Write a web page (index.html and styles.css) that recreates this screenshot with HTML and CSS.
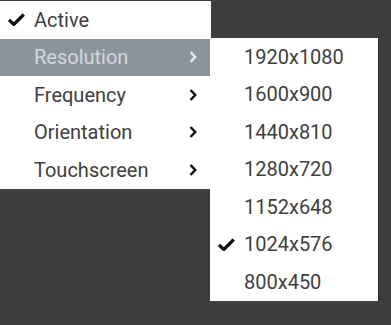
FILE: index.html
```html
<!DOCTYPE html>
<html lang="en">
<head>
  <meta charset="UTF-8">
  <title>Screen menu</title>
  <link rel="stylesheet" href="styles.css">
</head>
<body>
  <div class="menus">
    <ul class="menu main-menu">
      <li class="item">
        <span class="check"><svg width="17" height="13" viewBox="0 0 17 13"><path d="M1 7 L5.8 11.5 L15.8 1.5" fill="none" stroke="#111" stroke-width="3.2"/></svg></span>
        <span class="label">Active</span>
      </li>
      <li class="item selected">
        <span class="check"></span>
        <span class="label">Resolution</span>
        <svg class="arrow" width="8" height="12" viewBox="0 0 8 12"><path d="M1.5 1 L6.2 6 L1.5 11" fill="none" stroke="currentColor" stroke-width="2.5"/></svg>
      </li>
      <li class="item">
        <span class="check"></span>
        <span class="label">Frequency</span>
        <svg class="arrow" width="8" height="12" viewBox="0 0 8 12"><path d="M1.5 1 L6.2 6 L1.5 11" fill="none" stroke="currentColor" stroke-width="2.5"/></svg>
      </li>
      <li class="item">
        <span class="check"></span>
        <span class="label">Orientation</span>
        <svg class="arrow" width="8" height="12" viewBox="0 0 8 12"><path d="M1.5 1 L6.2 6 L1.5 11" fill="none" stroke="currentColor" stroke-width="2.5"/></svg>
      </li>
      <li class="item">
        <span class="check"></span>
        <span class="label">Touchscreen</span>
        <svg class="arrow" width="8" height="12" viewBox="0 0 8 12"><path d="M1.5 1 L6.2 6 L1.5 11" fill="none" stroke="currentColor" stroke-width="2.5"/></svg>
      </li>
    </ul>

    <ul class="menu sub-menu">
      <li class="item"><span class="check"></span><span class="label">1920x1080</span></li>
      <li class="item"><span class="check"></span><span class="label">1600x900</span></li>
      <li class="item"><span class="check"></span><span class="label">1440x810</span></li>
      <li class="item"><span class="check"></span><span class="label">1280x720</span></li>
      <li class="item"><span class="check"></span><span class="label">1152x648</span></li>
      <li class="item">
        <span class="check"><svg width="17" height="13" viewBox="0 0 17 13"><path d="M1 7 L5.8 11.5 L15.8 1.5" fill="none" stroke="#111" stroke-width="3.2"/></svg></span>
        <span class="label">1024x576</span>
      </li>
      <li class="item"><span class="check"></span><span class="label">800x450</span></li>
    </ul>
  </div>
</body>
</html>
```

FILE: styles.css
```css
body {
  margin: 0;
  background-color: #3d3d3d;
  font-family: Roboto, 'Noto Sans', sans-serif;
  font-size: 20px;
  color: #404040;
}
.menus {
  display: flex;
  align-items: flex-start;
  padding-top: 1px;
}
.menu {
  list-style: none;
  margin: 0;
  padding: 0;
  background-color: #fff;
}
.main-menu {
  width: 210px;
  box-shadow: 1px 0 0 #fff;
}
.sub-menu {
  width: 168px;
  margin-top: 37px;
  box-shadow: 1px 1px 0 #2c2c2c;
}
.item {
  display: flex;
  align-items: center;
  height: 37.5px;
  padding-left: 8px;
  padding-right: 13px;
}
.check {
  width: 26px;
  display: flex;
  align-items: center;
}
.label {
  flex: 1;
}
.arrow {
  color: #111;
}
.item.selected {
  background-color: #8b949c;
  color: #d4d8dc;
}
.item.selected .arrow {
  color: #e8eaec;
}
```
